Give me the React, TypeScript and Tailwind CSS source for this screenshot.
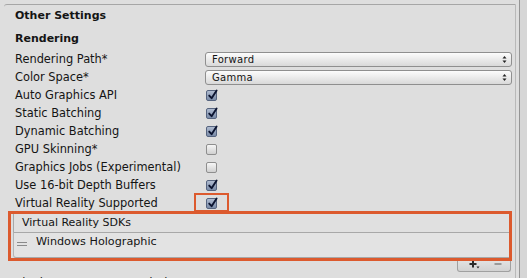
import React from "react";

function Check({ checked }: { checked: boolean }) {
  if (checked) {
    return (
      <div className="relative ml-[1px] h-[11px] w-[11px] rounded-[2px] border border-[#56647f] bg-linear-to-b from-[#b0bcd0] to-[#7a8ba8]">
        <svg className="absolute left-[0px] top-[-2px]" width="12" height="12" viewBox="0 0 12 12">
          <path d="M2.2 6.6 L4.6 9.2 L9.6 1.6" fill="none" stroke="#0c1430" strokeWidth="1.9" strokeLinecap="round" strokeLinejoin="round" />
        </svg>
      </div>
    );
  }
  return (
    <div className="ml-[1px] h-[11px] w-[11px] rounded-[2px] border border-[#8e8e8e] bg-linear-to-b from-[#f6f6f6] to-[#d0d0d0]" />
  );
}

function Dropdown({ value }: { value: string }) {
  return (
    <div className="flex h-[15px] w-[307px] items-center justify-between rounded-[3px] border border-[#8f8f8f] bg-linear-to-b from-[#fcfcfc] to-[#d9d9d9] pl-[6px] pr-[4px] text-[10px] leading-[13px] tracking-[0.3px]">
      <span>{value}</span>
      <svg width="5" height="9" viewBox="0 0 5 9">
        <polygon points="0.5,3.5 2.5,1 4.5,3.5" fill="#222" />
        <polygon points="0.5,5.5 2.5,8 4.5,5.5" fill="#222" />
      </svg>
    </div>
  );
}

function Row({ label, children }: { label: string; children?: React.ReactNode }) {
  return (
    <div className="relative flex h-[18px] items-center">
      <div className="w-[190px] whitespace-nowrap text-[11.4px] leading-[18px]">{label}</div>
      {children}
    </div>
  );
}

export default function App() {
  const toggles: [string, boolean][] = [
    ["Auto Graphics API", true],
    ["Static Batching", true],
    ["Dynamic Batching", true],
    ["GPU Skinning*", false],
    ["Graphics Jobs (Experimental)", false],
    ["Use 16-bit Depth Buffers", true],
  ];
  return (
    <div className="flex h-[278px] w-[527px] overflow-hidden bg-[#dedede] font-['DejaVu_Sans',sans-serif] text-[#141414]">
      <div className="w-[519px] shrink-0 pl-[4px] pr-[3px] pt-[4px]">
        <div className="h-[300px] rounded-tl-[3px] border-r border-t border-r-[#b9b9b9] border-t-[#a6a6a6] pl-[11px] pr-[0px]">
          <div className="mt-[2px] h-[18px] text-[11px] font-bold leading-[18px]">Other Settings</div>
          <div className="mt-[5px] h-[18px] text-[11px] font-bold leading-[18px]">Rendering</div>
          <div className="mt-[2px]">
            <Row label="Rendering Path*">
              <Dropdown value="Forward" />
            </Row>
            <Row label="Color Space*">
              <Dropdown value="Gamma" />
            </Row>
            {toggles.map(([l, c]) => (
              <Row key={l} label={l}>
                <Check checked={c} />
              </Row>
            ))}
            <Row label="Virtual Reality Supported">
              <Check checked={true} />
              <div className="absolute left-[179px] top-[-1px] h-[19px] w-[35px] border-2 border-[#dc5a2e]" />
            </Row>
          </div>

          <div className="relative ml-[-2px] mt-[0px] w-[498px]">
            <div className="flex h-[20px] items-center border-l border-r border-t border-[#a8a8a8] bg-[#e0e0e0] pl-[8px] text-[11px] leading-[18px]">
              Virtual Reality SDKs
            </div>
            <div className="flex h-[26px] items-start rounded-bl-[3px] border border-[#a8a8a8] border-l-[#b4b4b4] bg-[#e3e3e3]">
              <div className="ml-[3px] mt-[9px] flex w-[10px] flex-col gap-[2px]">
                <div className="h-[1px] bg-[#8a8a8a]" />
                <div className="h-[1px] bg-[#8a8a8a]" />
              </div>
              <div className="ml-[9px] text-[11.2px] leading-[18px]">Windows Holographic</div>
            </div>
            <div className="ml-auto flex h-[14px] w-[54px] items-center rounded-b-[3px] border-b border-l border-r border-[#a0a0a0] bg-linear-to-b from-[#e6e6e6] to-[#d2d2d2]">
              <svg className="ml-[11px]" width="11" height="9" viewBox="0 0 11 9">
                <path d="M4 0.5 V7.5 M0.5 4 H7.5" stroke="#2a2a2a" strokeWidth="2" />
                <polygon points="7.5,6.5 10.5,6.5 9,8.5" fill="#2a2a2a" />
              </svg>
              <svg className="ml-[14px]" width="8" height="9" viewBox="0 0 8 9">
                <path d="M0.5 4 H7.5" stroke="#9a9a9a" strokeWidth="2" />
              </svg>
            </div>
            <div className="absolute left-[-5px] top-[-1px] h-[50px] w-[504px] border-[3px] border-[#dc5a2e]" />
          </div>

          <div className="mt-[2px]">
            <Row label="Single-Pass Stereo Rendering">
              <Check checked={false} />
            </Row>
          </div>
        </div>
      </div>
      <div className="w-[1px] shrink-0 bg-[#959595]" />
      <div className="flex-1 bg-[#d6d6d6]" />
    </div>
  );
}
